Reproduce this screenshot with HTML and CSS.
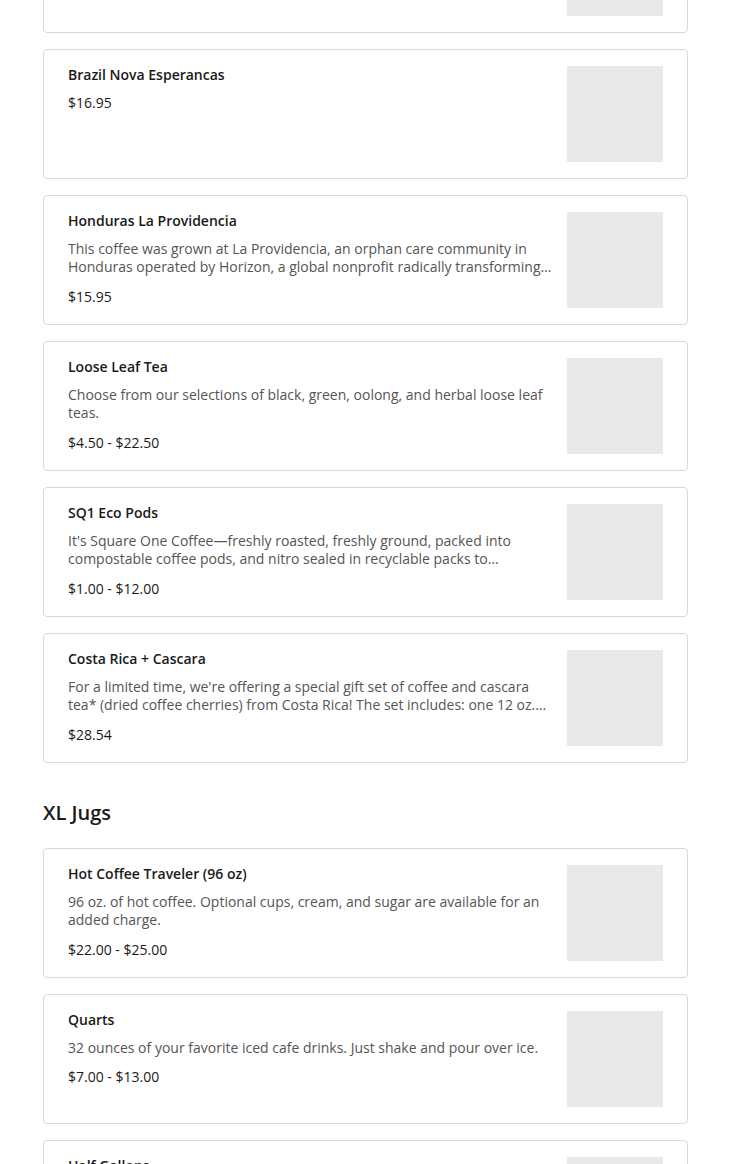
FILE: index.html
```html
<!DOCTYPE html>
<html lang="en">
<head>
<meta charset="utf-8">
<title>Menu</title>
<link rel="stylesheet" href="styles.css">
</head>
<body>
<main class="menu">
  <section class="section section-first">
    <div class="item-list">
      <article class="item">
        <div class="item-info"></div>
        <div class="item-image"></div>
      </article>
      <article class="item">
        <div class="item-info">
          <h3 class="item-name">Brazil Nova Esperancas</h3>
          <p class="item-price">$16.95</p>
        </div>
        <div class="item-image"></div>
      </article>
      <article class="item">
        <div class="item-info">
          <h3 class="item-name">Honduras La Providencia</h3>
          <p class="item-desc">This coffee was grown at La Providencia, an orphan care community in Honduras operated by Horizon, a global nonprofit radically transforming…</p>
          <p class="item-price">$15.95</p>
        </div>
        <div class="item-image"></div>
      </article>
      <article class="item">
        <div class="item-info">
          <h3 class="item-name">Loose Leaf Tea</h3>
          <p class="item-desc">Choose from our selections of black, green, oolong, and herbal loose leaf teas.</p>
          <p class="item-price">$4.50 - $22.50</p>
        </div>
        <div class="item-image"></div>
      </article>
      <article class="item">
        <div class="item-info">
          <h3 class="item-name">SQ1 Eco Pods</h3>
          <p class="item-desc">It's Square One Coffee—freshly roasted, freshly ground, packed into compostable coffee pods, and nitro sealed in recyclable packs to…</p>
          <p class="item-price">$1.00 - $12.00</p>
        </div>
        <div class="item-image"></div>
      </article>
      <article class="item">
        <div class="item-info">
          <h3 class="item-name">Costa Rica + Cascara</h3>
          <p class="item-desc">For a limited time, we're offering a special gift set of coffee and cascara tea* (dried coffee cherries) from Costa Rica! The set includes: one 12 oz.…</p>
          <p class="item-price">$28.54</p>
        </div>
        <div class="item-image"></div>
      </article>
    </div>
  </section>

  <section class="section">
    <h2 class="section-title">XL Jugs</h2>
    <div class="item-list">
      <article class="item">
        <div class="item-info">
          <h3 class="item-name">Hot Coffee Traveler (96 oz)</h3>
          <p class="item-desc">96 oz. of hot coffee. Optional cups, cream, and sugar are available for an added charge.</p>
          <p class="item-price">$22.00 - $25.00</p>
        </div>
        <div class="item-image"></div>
      </article>
      <article class="item">
        <div class="item-info">
          <h3 class="item-name">Quarts</h3>
          <p class="item-desc">32 ounces of your favorite iced cafe drinks. Just shake and pour over ice.</p>
          <p class="item-price">$7.00 - $13.00</p>
        </div>
        <div class="item-image"></div>
      </article>
      <article class="item">
        <div class="item-info">
          <h3 class="item-name">Half Gallons</h3>
        </div>
        <div class="item-image"></div>
      </article>
    </div>
  </section>
</main>
</body>
</html>
```
FILE: styles.css
```css
* {
  box-sizing: border-box;
}

html, body {
  margin: 0;
  padding: 0;
  background: #ffffff;
}

body {
  font-family: "Open Sans", "Liberation Sans", sans-serif;
  color: #1a1a1a;
  overflow: hidden;
}

.menu {
  width: 645px;
  margin: 0 0 0 43px;
}

.section-first {
  margin-top: -97px;
}

.section-title {
  margin: 36px 0 21px;
  font-size: 20px;
  line-height: 28px;
  font-weight: 600;
  color: #1a1a1a;
}

.item-list {
  display: flex;
  flex-direction: column;
  gap: 16px;
}

.item {
  display: flex;
  align-items: flex-start;
  gap: 14px;
  padding: 16px 24px;
  border: 1px solid #d8d8d8;
  border-radius: 4px;
  background: #ffffff;
}

.item-info {
  flex: 1;
  min-width: 0;
}

.item-name {
  margin: 0;
  font-size: 14px;
  line-height: 17px;
  font-weight: 600;
  color: #1a1a1a;
}

.item-desc {
  margin: 10.5px 0 0;
  font-size: 14px;
  line-height: 18.62px;
  color: #555555;
  display: -webkit-box;
  -webkit-line-clamp: 2;
  -webkit-box-orient: vertical;
  overflow: hidden;
}

.item-price {
  margin: 10px 0 0;
  font-size: 14px;
  line-height: 20px;
  color: #1a1a1a;
}

.item-image {
  flex: none;
  width: 96px;
  height: 96px;
  background: #e9e9e9;
}
```
